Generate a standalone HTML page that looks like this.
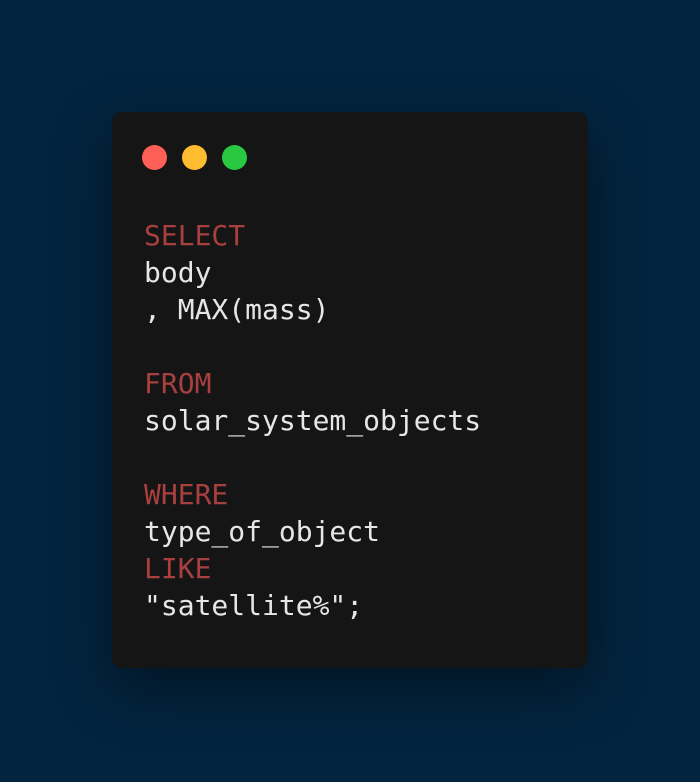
<!DOCTYPE html>
<html><head><style>
html,body{margin:0;padding:0;width:700px;height:782px;background:#03243f;overflow:hidden}
.card{position:absolute;left:112px;top:112px;width:476px;height:556px;background:#151515;border-radius:10px;box-shadow:0 20px 60px rgba(0,0,0,0.45)}
.d{position:absolute;top:33px;width:25px;height:25px;border-radius:50%}
pre{position:absolute;left:32px;top:105px;margin:0;font-family:"DejaVu Sans Mono","Liberation Mono",monospace;font-size:28px;line-height:37px;color:#e6e6e6}
.k{color:#a8403f}
</style></head><body>
<div class="card">
<div class="d" style="left:29.5px;background:#fe5f57"></div>
<div class="d" style="left:69.5px;background:#febc2e"></div>
<div class="d" style="left:109.5px;background:#28c840"></div>
<pre><span class="k">SELECT</span>
body
, MAX(mass)

<span class="k">FROM</span>
solar_system_objects

<span class="k">WHERE</span>
type_of_object
<span class="k">LIKE</span>
"satellite%";</pre>
</div>
</body></html>
